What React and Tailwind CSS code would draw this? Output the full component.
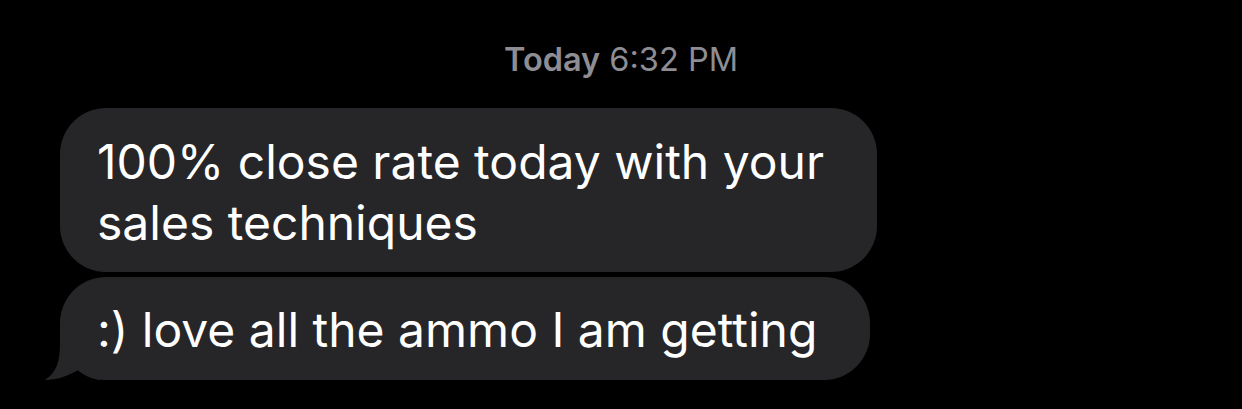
import React from 'react';

// iMessage-style thread, dark mode
function Bubble({ children, className = '', tail = false }) {
  return (
    <div className={`relative bg-[#262629] rounded-[46px] text-white ${className}`}>
      {tail && (
        <svg
          className="absolute left-[-16px] bottom-0"
          width="56"
          height="45"
          viewBox="0 0 56 45"
        >
          <path
            d="M16 0 L16 8 C16 26 13 37 1 45 C13 45 24 41 34 35 C41 41 48 44 56 45 L56 0 Z"
            fill="#262629"
          />
        </svg>
      )}
      {children}
    </div>
  );
}

export default function App() {
  return (
    <div
      className="w-[1242px] h-[409px] bg-black overflow-hidden"
      style={{ fontFamily: 'Inter, "Noto Sans", sans-serif' }}
    >
      <div className="pt-[40px] text-center text-[32.5px] leading-[40px] text-[#8d8d93]">
        <span className="font-semibold">Today</span> 6:32 PM
      </div>
      <div className="pl-[60px] pt-[28px] flex flex-col gap-[5px]">
        <Bubble className="w-[817px] h-[164px] pl-[37px] pt-[23px]">
          <p className="text-[48px] leading-[61px]">
            100% close rate today with your
            <br />
            sales techniques
          </p>
        </Bubble>
        <Bubble tail className="w-[810px] h-[103px] pl-[37px] pt-[22px]">
          <p className="text-[48px] leading-[61px]">
            :) love all the ammo I am getting
          </p>
        </Bubble>
      </div>
    </div>
  );
}
